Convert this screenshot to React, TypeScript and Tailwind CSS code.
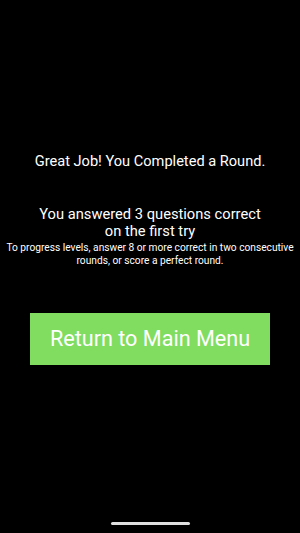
export default function App() {
  return (
    <div
      className="relative flex h-[533px] w-[300px] flex-col items-center bg-black text-white"
      style={{ fontFamily: "Roboto, 'Liberation Sans', sans-serif" }}
    >
      <p className="mt-[151px] text-center text-[14.6px] leading-[20px]">
        Great Job! You Completed a Round.
      </p>
      <p className="mt-[35px] text-center text-[14.7px] leading-[17px]">
        You answered 3 questions correct
        <br />
        on the first try
      </p>
      <p className="mt-[1px] text-center text-[10.2px] leading-[13px]">
        To progress levels, answer 8 or more correct in two consecutive rounds, or score a perfect round.
      </p>
      <button className="mt-[46px] flex h-[52px] w-[240px] items-center justify-center bg-[#80dd60] text-[21.6px] text-white">
        Return to Main Menu
      </button>
      <div className="absolute bottom-[8px] left-[111px] h-[3px] w-[79px] rounded-full bg-[#e0e0e0]" />
    </div>
  );
}
